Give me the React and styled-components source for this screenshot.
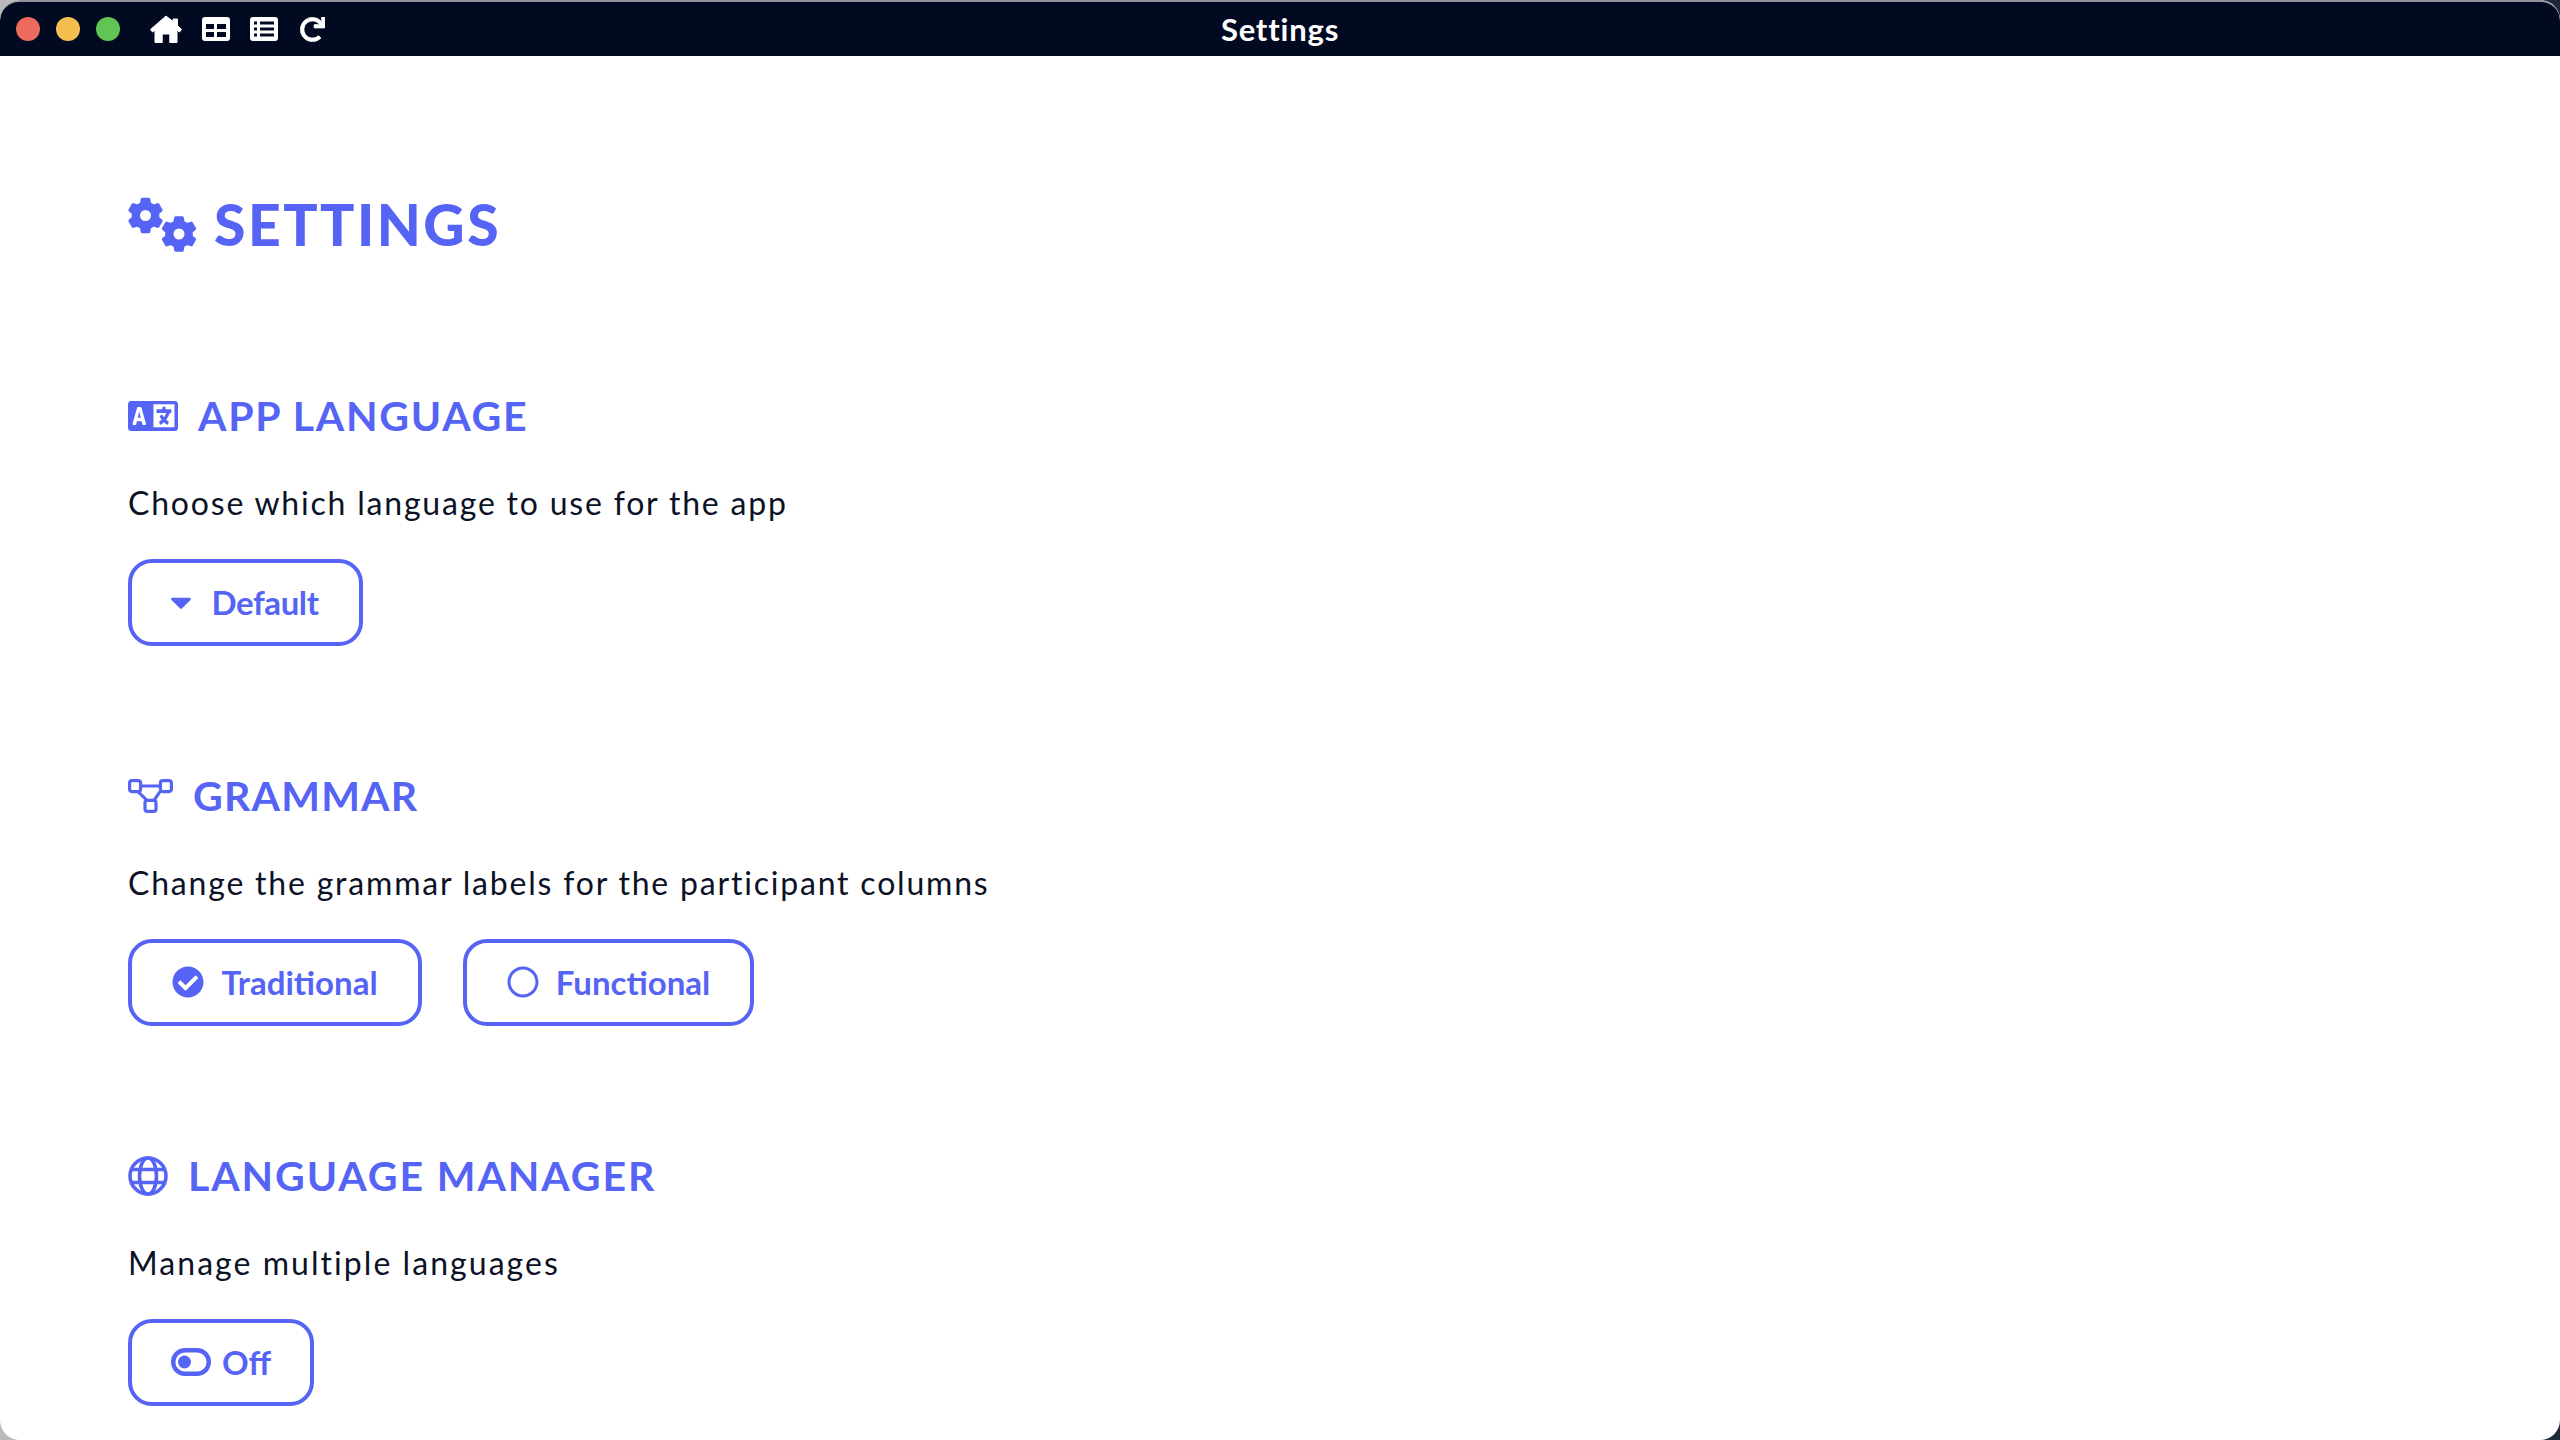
import React from "react";
import styled, { createGlobalStyle } from "styled-components";
import { FaRedo, FaCaretDown, FaCheckCircle, FaRegCircle } from "react-icons/fa";

const Global = createGlobalStyle`
  html, body { margin: 0; padding: 0; width: 2560px; height: 1440px; overflow: hidden; }
  body { background: linear-gradient(to right, #b9b9b9 50%, #1e2a3a 50%); }
`;
const Accent = "#5664f5";
const Win = styled.div`
  width: 2560px; height: 1440px; background: #fff; border-radius: 20px; overflow: hidden;
  font-family: "Lato", "Noto Sans", sans-serif; display: flex; flex-direction: column;
`;
const TitleBar = styled.header`
  height: 54px; border-top: 2px solid #8e9199; background: #020a21; color: #fff; flex: none;
  display: grid; grid-template-columns: 1fr auto 1fr; align-items: center; border-radius: 20px 20px 0 0;
`;
const Left = styled.div`display: flex; align-items: center; padding-left: 16px;`;
const Light = styled.span`
  width: 24px; height: 24px; border-radius: 50%; background: ${p => p.$c}; margin-right: 16px;
`;
const Tools = styled.div`display: flex; align-items: center; gap: 20px; margin-left: 14px; color: #fff;`;
const RedoGlyph = styled(FaRedo)`margin-left: 2px; stroke: #fff; stroke-width: 16px;`;
const WinTitle = styled.div`font-size: 31px; font-weight: 700; letter-spacing: .8px;`;
const Content = styled.main`padding: 136px 128px 0; display: flex; flex-direction: column;`;
const PageTitle = styled.h1`
  display: flex; align-items: center; gap: 17px; margin: 0 0 136px; color: ${Accent};
  font-size: 57px; line-height: 64px; font-weight: 900; letter-spacing: 2.5px;
`;
const Section = styled.section`display: flex; flex-direction: column; margin-bottom: 126px;`;
const Heading = styled.h2`
  display: flex; align-items: center; gap: ${p => p.$gap}px; margin: 0 0 41px; color: ${Accent};
  font-size: 41px; line-height: 48px; font-weight: 700; letter-spacing: ${p => p.$track || 1.7}px;
`;
const Desc = styled.p`
  margin: 0 0 34px; color: #0c1226; font-size: 32px; line-height: 44px; font-weight: 400;
  letter-spacing: ${p => p.$track || 1.8}px;
`;
const Row = styled.div`display: flex; gap: 41px;`;
const Btn = styled.button`
  display: inline-flex; align-items: center; justify-content: center; gap: ${p => p.$gap || 17}px;
  height: 87px; width: ${p => p.$w}px; box-sizing: border-box; padding: 0 ${p => p.$pr || 0}px 2px 0; background: #fff;
  border: 4px solid ${Accent}; border-radius: 24px; color: ${Accent};
  font-family: inherit; font-size: 33px; font-weight: 700; letter-spacing: ${p => p.$track || 0}px;
`;

const gear = (cx, cy, r, h) => {
  const pts = [];
  for (let i = 0; i < 6; i++) {
    const a = (i * Math.PI) / 3 + Math.PI / 2;
    [[-0.34, 0.76], [-0.2, 1], [0.2, 1], [0.34, 0.76]].forEach(([d, k]) =>
      pts.push([cx + r * k * Math.cos(a + d), cy + r * k * Math.sin(a + d)]));
  }
  const outer = "M" + pts.map(p => p[0].toFixed(2) + " " + p[1].toFixed(2)).join("L") + "Z";
  const hole = `M${cx - h} ${cy}a${h} ${h} 0 1 0 ${2 * h} 0a${h} ${h} 0 1 0 ${-2 * h} 0Z`;
  return outer + hole;
};

const CogsIcon = () => (
  <svg width="69" height="55" viewBox="0 0 69 55" fill={Accent} stroke={Accent} strokeWidth="3" strokeLinejoin="round" fillRule="evenodd">
    <path d={gear(17.5, 18.5, 16.5, 7)} />
    <path d={gear(51, 37, 16.5, 7)} />
  </svg>
);
const LanguageIcon = () => (
  <svg width="50" height="30" viewBox="0 96 640 320" preserveAspectRatio="none">
    <path fill={Accent} d="M36 96H604c20 0 36 16 36 36V380c0 20-16 36-36 36H36c-20 0-36-16-36-36V132c0-20 16-36 36-36Z" />
    <rect x="326" y="131" width="269" height="245" fill="#fff" />
    <path fill="#fff" d="M58.9 336.1L116.4 167c1.7-4.9 6.2-8.1 11.4-8.1h32.5c5.1 0 9.7 3.3 11.4 8.1l57.5 169.1c2.6 7.8-3.1 15.9-11.4 15.9h-22.9a12 12 0 0 1-11.5-8.6l-9.4-31.9h-60.2l-9.1 31.8c-1.5 5.1-6.2 8.7-11.5 8.7H70.3c-8.2 0-14-8.1-11.4-15.9zM152.1 236.2c-3.5-12.1-7.8-33.2-7.8-33.2h-.5s-4.3 21.1-7.8 33.2l-11.1 37.5H163z" fillRule="evenodd" />
    <path fill={Accent} transform="translate(-36 -3)" d="M592 216c0 6.6-5.4 12-12 12h-11.4c-6.9 23.6-21.7 47.4-42.7 69.9 8.4 6.4 17.1 12.5 26.1 18 5.5 3.4 7.3 10.5 4.1 16.2l-7.9 13.9c-3.4 5.9-10.9 7.8-16.7 4.3-12.6-7.8-24.5-16.1-35.4-24.9-10.9 8.7-22.7 17.1-35.4 24.9-5.8 3.5-13.3 1.6-16.7-4.3l-7.9-13.9c-3.2-5.6-1.4-12.8 4.2-16.2 9.3-5.7 18-11.7 26.1-18-7.9-8.4-14.9-17-21-25.7-4-5.7-2.2-13.6 3.7-17.1l6.5-3.9 7.3-4.3c5.4-3.2 12.4-1.7 16 3.4 5 7 10.8 14 17.4 20.9 13.5-14.2 23.8-28.9 30-43.2H412c-6.6 0-12-5.4-12-12v-16c0-6.6 5.4-12 12-12h64v-16c0-6.6 5.4-12 12-12h16c6.6 0 12 5.4 12 12v16h64c6.6 0 12 5.4 12 12z" />
  </svg>
);
const GraphIcon = () => (
  <svg width="45" height="34" viewBox="0 0 45 34" fill="none" stroke={Accent} strokeWidth="3.2" strokeLinejoin="round">
    <rect x="1.6" y="1.6" width="11" height="11" rx="2.5" />
    <rect x="32.4" y="1.6" width="11" height="11" rx="2.5" />
    <rect x="17" y="21.4" width="11" height="11" rx="2.5" />
    <path d="M12.6 7H32.4M10 12.6L19 21.4M32 12.6L26 21.4" />
  </svg>
);
const GlobeIcon = () => (
  <svg width="40" height="40" viewBox="0 0 40 40" fill="none" stroke={Accent} strokeWidth="3.6">
    <circle cx="20" cy="20" r="18" />
    <ellipse cx="20" cy="20" rx="8.5" ry="18" />
    <path d="M3.5 13.5H36.5M3.5 26.5H36.5" />
  </svg>
);
const ToggleIcon = () => (
  <svg width="40" height="28" viewBox="0 0 40 28" fill="none">
    <rect x="2.2" y="2.2" width="35.6" height="23.6" rx="11.8" stroke={Accent} strokeWidth="4.4" />
    <circle cx="13.5" cy="14" r="6.5" fill={Accent} />
  </svg>
);
const HomeIcon = () => (
  <svg width="32" height="28" viewBox="0 0 32 28" fill="#fff" stroke="#fff" strokeWidth="1" strokeLinejoin="round">
    <path d="M16 1L23 6.5V4H27.5V10.5L31.5 14.5L29.5 17L27 15.2V27.5H19.8V19H12.2V27.5H5V15.2L2.5 17L.5 14.5Z" />
  </svg>
);
const GridIcon = () => (
  <svg width="28" height="24" viewBox="0 0 28 24" fill="#fff" fillRule="evenodd">
    <path d="M3 0H25a3 3 0 0 1 3 3V21a3 3 0 0 1-3 3H3a3 3 0 0 1-3-3V3a3 3 0 0 1 3-3ZM4 7v5h8V7ZM15 7v5h9V7ZM4 15v5h8v-5ZM15 15v5h9v-5Z" />
  </svg>
);
const ListIcon = () => (
  <svg width="28" height="24" viewBox="0 0 28 24" fill="#fff" fillRule="evenodd">
    <path d="M3 0H25a3 3 0 0 1 3 3V21a3 3 0 0 1-3 3H3a3 3 0 0 1-3-3V3a3 3 0 0 1 3-3ZM4 4.5v3h3v-3ZM10 4.5v3h14v-3ZM4 10.5v3h3v-3ZM10 10.5v3h14v-3ZM4 16.5v3h3v-3ZM10 16.5v3h14v-3Z" />
  </svg>
);

export default function App() {
  return (
    <>
      <Global />
      <Win>
        <TitleBar>
          <Left>
            <Light $c="#ec6a5e" />
            <Light $c="#f4bf4f" />
            <Light $c="#61c554" />
            <Tools>
              <HomeIcon />
              <GridIcon />
              <ListIcon />
              <RedoGlyph size={25} />
            </Tools>
          </Left>
          <WinTitle>Settings</WinTitle>
          <span />
        </TitleBar>
        <Content>
          <PageTitle><CogsIcon />SETTINGS</PageTitle>
          <Section>
            <Heading $gap={20}><LanguageIcon />APP LANGUAGE</Heading>
            <Desc>Choose which language to use for the app</Desc>
            <Row><Btn $w={235} $gap={13} $pr={8} $track={-0.4}><FaCaretDown size={34} />Default</Btn></Row>
          </Section>
          <Section>
            <Heading $gap={20} $track={1.2}><GraphIcon />GRAMMAR</Heading>
            <Desc>Change the grammar labels for the participant columns</Desc>
            <Row>
              <Btn $w={294}><FaCheckCircle size={32} />Traditional</Btn>
              <Btn $w={291}><FaRegCircle size={32} />Functional</Btn>
            </Row>
          </Section>
          <Section>
            <Heading $gap={20} $track={1.9}><GlobeIcon />LANGUAGE MANAGER</Heading>
            <Desc $track={2.05}>Manage multiple languages</Desc>
            <Row><Btn $w={186} $gap={11}><ToggleIcon />Off</Btn></Row>
          </Section>
        </Content>
      </Win>
    </>
  );
}
